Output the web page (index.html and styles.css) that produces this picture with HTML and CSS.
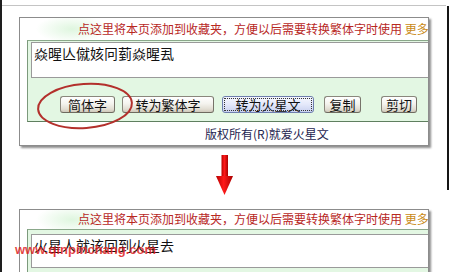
FILE: index.html
```html
<!DOCTYPE html>
<html lang="zh">
<head>
<meta charset="utf-8">
<link rel="stylesheet" href="styles.css">
</head>
<body>
<div class="sheet">
  <div class="topline"></div>
  <div class="upper">
    <div class="panel">
      <div class="head">点这里将本页添加到收藏夹，方便以后需要转换繁体字时使用 <span class="more">更多</span></div>
      <div class="work">
        <div class="area">焱暒亾僦姟冋菿焱暒厾</div>
        <div class="btns">
          <span class="btn b1">简体字</span>
          <span class="btn b2">转为繁体字</span>
          <span class="btn b3 focus">转为火星文</span>
          <span class="btn b4">复制</span>
          <span class="btn b5">剪切</span>
        </div>
      </div>
      <div class="foot">版权所有(R)就爱火星文</div>
      <svg class="ring" width="140" height="130" viewBox="0 0 140 130">
        <ellipse cx="65" cy="88" rx="47" ry="22" transform="rotate(-4 65 88)" fill="none" stroke="#b3302c" stroke-width="2"/>
      </svg>
    </div>
    <svg class="arrow" width="17" height="41" viewBox="0 0 17 41">
      <defs>
        <linearGradient id="ag" x1="0" x2="1" y1="0" y2="0">
          <stop offset="0" stop-color="#b80000"/>
          <stop offset="0.45" stop-color="#ff1a1a"/>
          <stop offset="1" stop-color="#a80000"/>
        </linearGradient>
      </defs>
      <rect x="5.5" y="0" width="6.5" height="23" fill="url(#ag)"/>
      <polygon points="0,21 17,21 8.5,40" fill="url(#ag)"/>
    </svg>
  </div>
  <div class="panel lower">
    <div class="head short">点这里将本页添加到收藏夹，方便以后需要转换繁体字时使用 <span class="more">更多</span></div>
    <div class="work work-low">
      <div class="area area-low">火星人就该回到火星去</div>
    </div>
  </div>
  <div class="mark">www.qinpinchang.com</div>
</div>
</body>
</html>
```

FILE: styles.css
```css
html, body {
  margin: 0;
  padding: 0;
  background: #ffffff;
}
body {
  width: 449px;
  height: 272px;
  overflow: hidden;
  font-family: "Noto Sans CJK SC", "Noto Sans", sans-serif;
}
.sheet {
  position: relative;
  width: 449px;
  height: 272px;
  box-sizing: border-box;
  border-left: 2px solid #1e1e1e;
  overflow: hidden;
}
.topline {
  margin-top: 5px;
  height: 1px;
  width: 444px;
  background: #c4c4c4;
}
.upper {
  box-sizing: border-box;
  width: 447px;
  height: 184px;
  border-right: 2px solid #151515;
  padding: 11px 0 0 17px;
}
.panel {
  position: relative;
  box-sizing: border-box;
  width: 410px;
  height: 129px;
  border: 1px solid #8c8c8c;
  background: #ffffff;
  box-shadow: 2px 2px 2px rgba(0, 0, 0, 0.45);
}
.head {
  height: 22px;
  line-height: 22px;
  padding-left: 58px;
  font-size: 12px;
  color: #b8281f;
  white-space: nowrap;
  overflow: hidden;
  background: radial-gradient(ellipse 36px 14px at 52px 50%, #dff6df 0%, rgba(255,255,255,0) 100%);
}
.head.short {
  height: 19px;
  line-height: 18px;
}
.more {
  color: #c98a16;
}
.work {
  box-sizing: border-box;
  margin-left: 7px;
  height: 82px;
  padding: 1px 0 0 3px;
  background: #e3f7e3;
  border-left: 1px solid #7c9a7c;
  border-top: 1px solid #8aa88a;
  border-bottom: 1px solid #5f7f5f;
}
.area {
  box-sizing: border-box;
  height: 36px;
  padding: 1px 2px;
  background: #ffffff;
  border: 1px solid #9a9a9a;
  border-right: none;
  font-size: 14px;
  line-height: 18px;
  color: #111111;
  white-space: nowrap;
}
.btns {
  display: flex;
  margin-top: 18px;
}
.btn {
  box-sizing: border-box;
  height: 17px;
  line-height: 15px;
  font-size: 13px;
  color: #111111;
  text-align: center;
  border: 1px solid #8a877c;
  border-bottom-color: #6e6a5f;
  border-right-color: #77736a;
  border-radius: 3px;
  background: linear-gradient(#ffffff 0%, #f4f3ee 45%, #e2ded3 80%, #cfc9bb 100%);
}
.b1 { width: 55px; margin-left: 29px; }
.b2 { width: 92px; margin-left: 7px; }
.b3 { width: 92px; margin-left: 8px; }
.b4 { width: 37px; margin-left: 10px; }
.b5 { width: 36px; margin-left: 20px; }
.focus {
  border-color: #6f7fae;
  background: linear-gradient(#f6f7ff 0%, #e4e8fa 50%, #c9d1f0 100%);
  outline: 1px dotted #333333;
  outline-offset: -3px;
}
.foot {
  height: 23px;
  line-height: 24px;
  padding-left: 185px;
  font-size: 12px;
  color: #1e2450;
  white-space: nowrap;
}
.ring {
  position: absolute;
  left: 0;
  top: 0;
  pointer-events: none;
}
.arrow {
  display: block;
  margin: 9px 0 0 197px;
}
.lower {
  margin: 19px 0 0 17px;
  height: 80px;
}
.work-low {
  height: 60px;
  padding-top: 4px;
}
.area-low {
  height: 34px;
  padding-top: 1px;
}
.mark {
  position: absolute;
  left: 13px;
  top: 243px;
  font-family: "Liberation Sans", Arial, sans-serif;
  font-weight: bold;
  font-size: 13px;
  line-height: 13px;
  letter-spacing: 0;
  color: rgba(222, 30, 30, 0.85);
  white-space: nowrap;
}
```
